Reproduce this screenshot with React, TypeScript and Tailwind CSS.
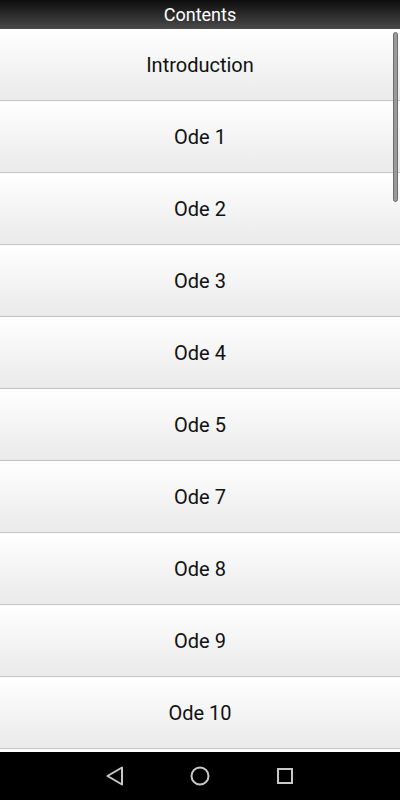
const items = [
  "Introduction",
  "Ode 1",
  "Ode 2",
  "Ode 3",
  "Ode 4",
  "Ode 5",
  "Ode 7",
  "Ode 8",
  "Ode 9",
  "Ode 10",
];

export default function App() {
  return (
    <div className="flex h-[800px] w-[400px] flex-col overflow-hidden bg-white font-['Roboto',sans-serif]">
      {/* Title bar */}
      <div className="flex h-[29px] shrink-0 items-center justify-center bg-gradient-to-b from-[#0e0e0e] to-[#4b4b4b] text-[18px] text-white">
        Contents
      </div>

      {/* List */}
      <div className="relative flex-1 overflow-hidden">
        {items.map((label) => (
          <div
            key={label}
            className="flex h-[72px] items-center justify-center border-b border-[#c4c4c4] bg-gradient-to-b from-white to-[#eaeaea] text-[20px] text-[#111]"
          >
            {label}
          </div>
        ))}
        {/* Scrollbar thumb */}
        <div className="absolute right-[2px] top-[3px] h-[170px] w-[5px] rounded-full border border-[#6e6e6e] bg-[#9a9a9a]" />
      </div>

      {/* Nav bar */}
      <div className="flex h-[48px] shrink-0 items-center justify-center gap-[64px] bg-black">
        <svg width="20" height="22" viewBox="0 0 20 22">
          <path d="M17 2.5 L2.5 11 L17 19.5 Z" fill="none" stroke="#c8c8c8" strokeWidth="2" strokeLinejoin="round" />
        </svg>
        <svg width="22" height="22" viewBox="0 0 22 22">
          <circle cx="11" cy="11" r="8.5" fill="none" stroke="#c8c8c8" strokeWidth="2" />
        </svg>
        <svg width="20" height="20" viewBox="0 0 20 20">
          <rect x="3" y="3" width="14" height="14" fill="none" stroke="#c8c8c8" strokeWidth="2" />
        </svg>
      </div>
    </div>
  );
}
